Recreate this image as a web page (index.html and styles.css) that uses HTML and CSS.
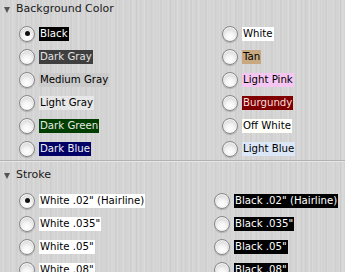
FILE: index.html
```html
<!DOCTYPE html>
<html>
<head>
<meta charset="utf-8">
<link rel="stylesheet" href="styles.css">
</head>
<body>
<div class="panel">
  <section class="group">
    <div class="head"><span class="tri"></span>Background Color</div>
    <div class="grid grid-bg">
      <div class="opt"><span class="radio on"></span><span class="tag t-black">Black</span></div>
      <div class="opt"><span class="radio"></span><span class="tag t-white">White</span></div>
      <div class="opt"><span class="radio"></span><span class="tag t-dgray">Dark Gray</span></div>
      <div class="opt"><span class="radio"></span><span class="tag t-tan">Tan</span></div>
      <div class="opt"><span class="radio"></span><span class="tag t-mgray">Medium Gray</span></div>
      <div class="opt"><span class="radio"></span><span class="tag t-pink">Light Pink</span></div>
      <div class="opt"><span class="radio"></span><span class="tag t-lgray">Light Gray</span></div>
      <div class="opt"><span class="radio"></span><span class="tag t-burg">Burgundy</span></div>
      <div class="opt"><span class="radio"></span><span class="tag t-dgreen">Dark Green</span></div>
      <div class="opt"><span class="radio"></span><span class="tag t-offw">Off White</span></div>
      <div class="opt"><span class="radio"></span><span class="tag t-dblue">Dark Blue</span></div>
      <div class="opt"><span class="radio"></span><span class="tag t-lblue">Light Blue</span></div>
    </div>
  </section>
  <div class="sep"></div>
  <section class="group">
    <div class="head head2"><span class="tri"></span>Stroke</div>
    <div class="grid grid-stroke">
      <div class="opt"><span class="radio on"></span><span class="tag t-white">White .02" (Hairline)</span></div>
      <div class="opt"><span class="radio"></span><span class="tag t-black">Black .02" (Hairline)</span></div>
      <div class="opt"><span class="radio"></span><span class="tag t-white">White .035"</span></div>
      <div class="opt"><span class="radio"></span><span class="tag t-black">Black .035"</span></div>
      <div class="opt"><span class="radio"></span><span class="tag t-white">White .05"</span></div>
      <div class="opt"><span class="radio"></span><span class="tag t-black">Black .05"</span></div>
      <div class="opt"><span class="radio"></span><span class="tag t-white">White .08"</span></div>
      <div class="opt"><span class="radio"></span><span class="tag t-black">Black .08"</span></div>
    </div>
  </section>
</div>
</body>
</html>
```

FILE: styles.css
```css
html, body {
  margin: 0;
  padding: 0;
  height: 100%;
  overflow: hidden;
}
body {
  background-color: #d4d4d4;
  background-image:
    repeating-linear-gradient(90deg, rgba(255,255,255,0.10) 0 1px, transparent 1px 3px),
    repeating-linear-gradient(90deg, rgba(0,0,0,0.025) 0 2px, transparent 2px 5px),
    repeating-linear-gradient(90deg, rgba(255,255,255,0.08) 0 3px, transparent 3px 11px),
    repeating-linear-gradient(90deg, rgba(0,0,0,0.02) 0 1px, transparent 1px 17px);
  font-family: "DejaVu Sans", Verdana, sans-serif;
  color: #000;
}
.panel {
  display: flex;
  flex-direction: column;
}
.head {
  height: 18px;
  line-height: 18px;
  font-size: 11px;
  color: #1a1a1a;
  display: flex;
  align-items: center;
  padding-left: 4px;
}
.head2 {
  margin-top: 4px;
}
.tri {
  width: 0;
  height: 0;
  border-left: 3.5px solid transparent;
  border-right: 3.5px solid transparent;
  border-top: 6px solid #555;
  margin-right: 6px;
  margin-top: 1px;
}
.grid {
  display: grid;
  grid-auto-rows: 23px;
  padding-left: 20px;
  margin-top: 4px;
}
.grid-bg {
  grid-template-columns: 203px 1fr;
}
.grid-stroke {
  grid-template-columns: 195px 1fr;
  margin-top: 5px;
}
.opt {
  display: flex;
  align-items: center;
  gap: 5px;
  font-size: 10.2px;
}
.radio {
  position: relative;
  flex: none;
  width: 14px;
  height: 14px;
  margin-left: -1px;
  margin-right: -1px;
  border-radius: 50%;
  border: 1px solid #888;
  background: radial-gradient(circle at 50% 72%, #ffffff 0, #f4f4f4 35%, #dcdcdc 70%, #c2c2c2 100%);
  box-shadow: 0 1px 1px rgba(0,0,0,0.18), inset 0 1px 1px rgba(255,255,255,0.9);
}
.radio.on::after {
  content: "";
  position: absolute;
  left: 4.5px;
  top: 4.5px;
  width: 5px;
  height: 5px;
  border-radius: 50%;
  background: #111;
}
.tag {
  display: inline-block;
  line-height: 14px;
  height: 14px;
  padding: 0 1px;
  white-space: nowrap;
}
.t-black { background: #000; color: #fff; }
.t-white { background: #fff; color: #000; }
.t-dgray { background: #3f3f3f; color: #e4e4e4; }
.t-tan { background: #c9a880; color: #000; }
.t-mgray { background: #cbcbcb; color: #000; }
.t-pink { background: #f6c6f2; color: #000; }
.t-lgray { background: #e7e7e7; color: #000; }
.t-burg { background: #800000; color: #f2dede; }
.t-dgreen { background: #003f00; color: #eaeaea; }
.t-offw { background: #fffffa; color: #000; }
.t-dblue { background: #000066; color: #f0f0f0; }
.t-lblue { background: #dbe6f6; color: #000; }
.sep {
  height: 1px;
  background: #b2b2b2;
  border-bottom: 1px solid #e6e6e6;
}
```
